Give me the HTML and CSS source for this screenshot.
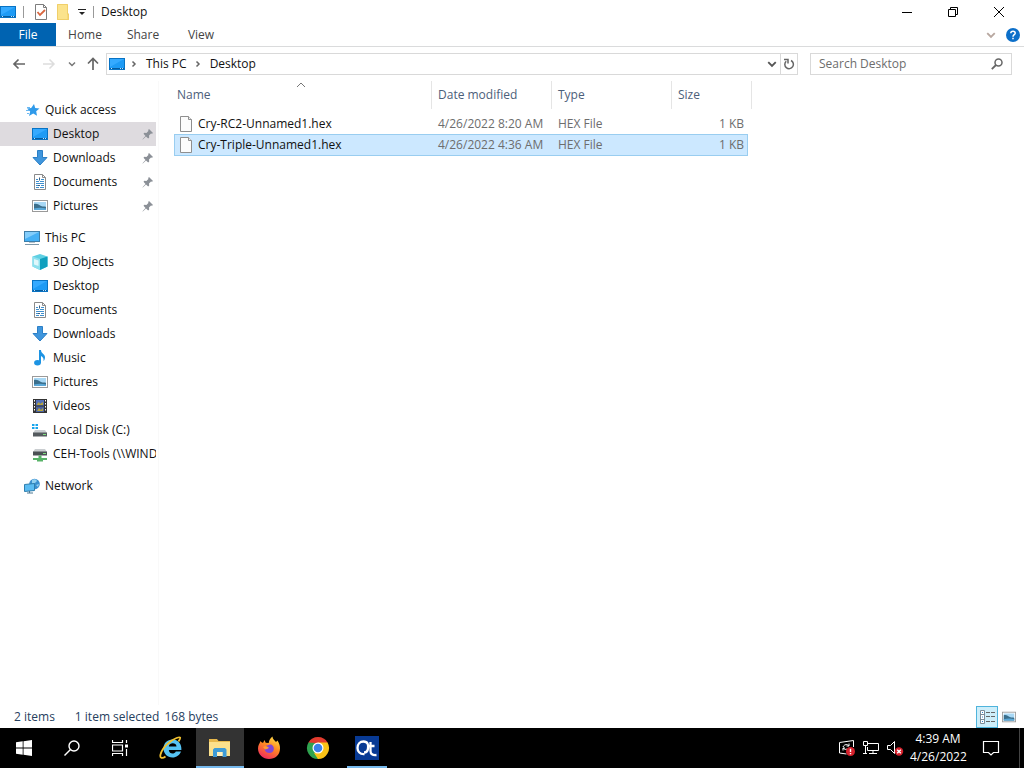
FILE: index.html
```html
<!DOCTYPE html>
<html lang="en">
<head>
  <meta charset="UTF-8">
  <title>Desktop</title>
  <link rel="stylesheet" href="styles.css">
</head>
<body>
  <!-- Shared icons -->
  <svg class="sprite" aria-hidden="true">
    <symbol id="i-desktop" viewBox="0 0 16 16">
      <rect x="0.5" y="2.5" width="15" height="11" fill="#1e9bf5" stroke="#0873c4"/>
      <path d="M1 3h14L1 11z" fill="#35aaff"/>
      <path d="M1 12.5h14" stroke="#075c9e"/>
      <path d="M2 12.5h1M11 12.5h1M13 12.5h1" stroke="#bfe4ff"/>
    </symbol>
    <symbol id="i-down" viewBox="0 0 16 16">
      <path d="M5.5 0.5h5v7h4.5L8 15 1 7.5h4.5z" fill="#3f96dd" stroke="#2b7fc6"/>
    </symbol>
    <symbol id="i-doc" viewBox="0 0 16 16">
      <path d="M2.5.5h8l3 3v12h-11z" fill="#fff" stroke="#8a8a8a"/>
      <path d="M10.5.5v3h3" fill="none" stroke="#8a8a8a"/>
      <path d="M4 5.500h2M9 5.500h3M4 7.500h3M8 7.500h4M4 9.500h8M4 11.500h2M9 11.500h3M4 13.500h3M8 13.500h4" stroke="#3f8fcd"/>
      <path d="M7 3.500h1v3H7zM6 11h2v1H6z" fill="#3c5f80"/>
    </symbol>
    <symbol id="i-pic" viewBox="0 0 16 16">
      <rect x="0.5" y="2.5" width="15" height="11" fill="#fff" stroke="#9a9a9a"/>
      <rect x="2" y="4" width="12" height="8" fill="#a8d8f5"/>
      <path d="M2 6c3-1 5 1 7 2s4 0 5 1v3H2z" fill="#3b6f8c"/>
      <path d="M2 10.500c4-1 8-1 12 0V12H2z" fill="#5aa8d8"/>
    </symbol>
    <symbol id="i-pin" viewBox="0 0 12 12">
      <path d="M7 1l4 4-1 .8-1-.2-2 2 .2 2-1 .9L4 8.500.8 11.500.5 11.200 3.500 8 1.500 5.800l.9-1 2 .2 2-2-.2-1z" fill="#8b9097"/>
    </symbol>
    <symbol id="i-chev" viewBox="0 0 8 8">
      <path d="M1 2.500l3 3 3-3" fill="none" stroke="currentColor" stroke-width="1.500"/>
    </symbol>
    <symbol id="i-right" viewBox="0 0 8 8">
      <path d="M2.500 1.500l2.500 2.500-2.500 2.500" fill="none" stroke="#666" stroke-width="1.500"/>
    </symbol>
    <symbol id="i-file" viewBox="0 0 16 16">
      <path d="M2.500.5h8l3 3v12h-11z" fill="#fcfcfc" stroke="#8f8f8f"/>
      <path d="M10.500.5v3h3" fill="#eee" stroke="#8f8f8f"/>
    </symbol>
  </svg>

  <header class="titlebar">
    <svg class="icon"><use href="#i-desktop"/></svg>
    <span class="divider"></span>
    <button class="quick" aria-label="Properties">
      <svg class="icon" viewBox="0 0 16 16"><path d="M2.500.5h8l3 3v12h-11z" fill="#fff" stroke="#7d7d7d"/><path d="M10.500.5v3h3" fill="none" stroke="#7d7d7d"/><path d="M4.500 8l2.500 3 5-5" fill="none" stroke="#d9663f" stroke-width="1.800"/></svg>
    </button>
    <button class="quick" aria-label="New folder">
      <svg class="icon" viewBox="0 0 16 16"><path d="M2 0h11v11l1 1v4H2z" fill="#fbe38c"/><path d="M12.500 9.500H14v6h-1.500z" fill="#f3d063"/><path d="M2.500.5h10v9.500l1 1v4.500h-11z" fill="none" stroke="#f0cf6a"/></svg>
    </button>
    <button class="quick-more" aria-label="Customize toolbar">
      <svg width="8" height="8" viewBox="0 0 8 8"><path d="M0 1.500h8" stroke="#222"/><path d="M1 4h6L4 7z" fill="#222"/></svg>
    </button>
    <span class="divider"></span>
    <h1>Desktop</h1>
    <div class="window-buttons">
      <button aria-label="Minimize"><svg width="12" height="12" viewBox="0 0 12 12"><path d="M1 6.500h10" stroke="#000"/></svg></button>
      <button aria-label="Restore"><svg width="12" height="12" viewBox="0 0 12 12"><path d="M1.500 3.500h7v7h-7zM3.500 3.500v-2h7v7h-2" fill="none" stroke="#000"/></svg></button>
      <button aria-label="Close"><svg width="12" height="12" viewBox="0 0 12 12"><path d="M1 1l10 10M11 1L1 11" stroke="#000"/></svg></button>
    </div>
  </header>

  <nav class="ribbon">
    <button class="tab file-tab">File</button>
    <button class="tab">Home</button>
    <button class="tab">Share</button>
    <button class="tab">View</button>
    <div class="ribbon-end">
      <button aria-label="Expand ribbon" class="expand"><svg width="10" height="10"><use href="#i-chev"/></svg></button>
      <button aria-label="Help"><svg width="14" height="14" viewBox="0 0 14 14"><circle cx="7" cy="7" r="7" fill="#0c6fc9"/><path d="M4.800 5.200C4.800 2.500 9.200 2.500 9.200 5.200 9.200 6.700 7 6.700 7 8.700M7 9.800v1.500" fill="none" stroke="#fff" stroke-width="1.500"/></svg></button>
    </div>
  </nav>

  <div class="address-row">
    <div class="history">
      <button aria-label="Back"><svg width="14" height="14" viewBox="0 0 14 14"><path d="M13 7H2M6.500 2.500L2 7l4.500 4.500" fill="none" stroke="#666" stroke-width="1.700"/></svg></button>
      <button aria-label="Forward"><svg width="14" height="14" viewBox="0 0 14 14"><path d="M1 7h11M7.500 2.500L12 7l-4.500 4.500" fill="none" stroke="#ddd" stroke-width="1.500"/></svg></button>
      <button aria-label="Recent" class="recent"><svg width="8" height="8"><use href="#i-chev"/></svg></button>
      <button aria-label="Up" class="up"><svg width="14" height="14" viewBox="0 0 14 14"><path d="M7 13V2M2 6.500L7 1.500l5 5" fill="none" stroke="#666" stroke-width="1.700"/></svg></button>
    </div>
    <div class="address">
      <svg class="icon"><use href="#i-desktop"/></svg>
      <svg class="crumb-arrow"><use href="#i-right"/></svg>
      <button>This PC</button>
      <svg class="crumb-arrow"><use href="#i-right"/></svg>
      <button>Desktop</button>
      <button class="drop" aria-label="Previous locations"><svg width="10" height="10"><use href="#i-chev"/></svg></button>
      <button class="refresh" aria-label="Refresh"><svg width="12" height="12" viewBox="0 0 12 12"><path d="M8 2.500A4.300 4.300 0 1 1 3.200 3.200M1 1.500h4v4" fill="none" stroke="#666" stroke-width="1.500"/></svg></button>
    </div>
    <div class="search">
      <input type="text" placeholder="Search Desktop" aria-label="Search Desktop">
      <svg width="12" height="12" viewBox="0 0 12 12"><circle cx="7.500" cy="4.500" r="3.500" fill="none" stroke="#666" stroke-width="1.500"/><path d="M5 7L.8 11.200" stroke="#666" stroke-width="1.800"/></svg>
    </div>
  </div>

  <main class="content">
    <nav class="tree">
      <ul>
        <li class="root"><a href="#"><svg class="icon" viewBox="0 0 16 16"><path d="M10 2l1.200 4 4.300.5-3.300 2.800.8 4.500-3.800-2.300L5 14l1.200-4.600L3 6.500l4.200-.5z" fill="#2f9aea"/><path d="M3 5.500h3M2 8.500h3M3 11.500h2" stroke="#6bb8f2"/></svg><span>Quick access</span></a></li>
        <li class="current"><a href="#"><svg class="icon"><use href="#i-desktop"/></svg><span>Desktop</span><svg class="pin"><use href="#i-pin"/></svg></a></li>
        <li><a href="#"><svg class="icon"><use href="#i-down"/></svg><span>Downloads</span><svg class="pin"><use href="#i-pin"/></svg></a></li>
        <li><a href="#"><svg class="icon"><use href="#i-doc"/></svg><span>Documents</span><svg class="pin"><use href="#i-pin"/></svg></a></li>
        <li><a href="#"><svg class="icon"><use href="#i-pic"/></svg><span>Pictures</span><svg class="pin"><use href="#i-pin"/></svg></a></li>
      </ul>
      <ul>
        <li class="root"><a href="#"><svg class="icon" viewBox="0 0 16 16"><rect x=".5" y="1.500" width="15" height="10" fill="#45b0f5" stroke="#3f7ea8"/><path d="M1 2h14L1 9z" fill="#83cdfb"/><path d="M5 12.500h6" stroke="#b5c2cb"/><path d="M1 14.500h14" stroke="#7c97a9"/></svg><span>This PC</span></a></li>
        <li><a href="#"><svg class="icon" viewBox="0 0 16 16"><path d="M8 0l7.500 2.500v10L8 16 .5 12.500v-10z" fill="#5fd0e3"/><path d="M.5 2.500L8 5v11L.5 12.500z" fill="#8ee0ee"/><path d="M2 5l4.500 1.500V12L2 10.500z" fill="#dff7fb"/><path d="M8 5l7.500-2.500v10L8 16z" fill="#109fbe"/></svg><span>3D Objects</span></a></li>
        <li><a href="#"><svg class="icon"><use href="#i-desktop"/></svg><span>Desktop</span></a></li>
        <li><a href="#"><svg class="icon"><use href="#i-doc"/></svg><span>Documents</span></a></li>
        <li><a href="#"><svg class="icon"><use href="#i-down"/></svg><span>Downloads</span></a></li>
        <li><a href="#"><svg class="icon" viewBox="0 0 16 16"><ellipse cx="5.500" cy="12.800" rx="3.400" ry="2.700" fill="#1c93e3"/><path d="M7 0h2c0 3.500 4 4 4 7.500 0 1.500-.8 3-1.500 3.500.5-3-1-4-2.500-5v7H7z" fill="#1c93e3"/></svg><span>Music</span></a></li>
        <li><a href="#"><svg class="icon"><use href="#i-pic"/></svg><span>Pictures</span></a></li>
        <li><a href="#"><svg class="icon" viewBox="0 0 16 16"><path d="M1 1h14v14H1z" fill="#333"/><path d="M4 2h8v5.500H4z" fill="#5470b8"/><path d="M4 8.500h8V14H4z" fill="#4b63a0"/><path d="M5 6l2-2 1 2 3-2v3H5zM5 13l2-3 2 2 2-2v3z" fill="#b7a43c"/><path d="M2.500 2v12M13.500 2v12" stroke="#fff" stroke-dasharray="1.500 1.500"/></svg><span>Videos</span></a></li>
        <li><a href="#"><svg class="icon" viewBox="0 0 16 16"><path d="M0 2h2.500v2H0zM3.500 2H6v2H3.500zM0 5h2.500v2H0zM3.500 5H6v2H3.500z" fill="#18a5ed"/><path d="M3 8h10l2 3H1z" fill="#c9cdd0"/><path d="M1 10.500h14v4H1z" fill="#555b5f"/><path d="M11 12.500h3" stroke="#7fe07f"/></svg><span>Local Disk (C:)</span></a></li>
        <li><a href="#"><svg class="icon" viewBox="0 0 16 16"><path d="M3 3h10l2 3H1z" fill="#c9cdd0"/><path d="M1 5.500h14v4H1z" fill="#4b5054"/><path d="M11 7.500h3" stroke="#7fe07f"/><path d="M6.500 9.500h3V12H15v2h-4v1.500H5V14H1v-2h5.500z" fill="#58b368"/></svg><span>CEH-Tools (\\WIND</span></a></li>
      </ul>
      <ul>
        <li class="root"><a href="#"><svg class="icon" viewBox="0 0 16 16"><circle cx="10.500" cy="6" r="5.300" fill="#3b8fcf"/><path d="M8 2c2-1 4-1 5 1l-2 2-3 1zM12 7l3-1-1 3z" fill="#93d0ef"/><path d="M.5 6.500l10-1v7l-10 1z" fill="#5bbcf2" stroke="#2f7fae"/><path d="M3 15h6M5.500 13v2" stroke="#4d7893"/></svg><span>Network</span></a></li>
      </ul>
    </nav>

    <section class="files">
      <table>
        <thead>
          <tr>
            <th class="col-name">Name
              <svg class="sort" viewBox="0 0 10 6"><path d="M1 5l4-4 4 4" fill="none" stroke="#777"/></svg>
            </th>
            <th class="col-date">Date modified</th>
            <th class="col-type">Type</th>
            <th class="col-size">Size</th>
            <th class="col-end"></th>
          </tr>
        </thead>
        <tbody>
          <tr>
            <td><div class="filename"><svg class="icon"><use href="#i-file"/></svg>Cry-RC2-Unnamed1.hex</div></td>
            <td>4/26/2022 8:20 AM</td>
            <td>HEX File</td>
            <td class="size">1 KB</td>
          </tr>
          <tr class="selected">
            <td><div class="filename"><svg class="icon"><use href="#i-file"/></svg>Cry-Triple-Unnamed1.hex</div></td>
            <td>4/26/2022 4:36 AM</td>
            <td>HEX File</td>
            <td class="size">1 KB</td>
          </tr>
        </tbody>
      </table>
    </section>
  </main>

  <footer class="status">
    <span class="count">2 items</span>
    <span>1 item selected</span>
    <span class="bytes">168 bytes</span>
    <div class="views">
      <button class="active" aria-label="Details view"><svg width="16" height="16" viewBox="0 0 16 16"><path d="M1.500 1.500h4v13h-4zM1.500 5.500h4M1.500 10.500h4" fill="#fff" stroke="#7b8c98"/><path d="M3 3.500h1M3 8h1M3 12.500h1" stroke="#2f86cf"/><path d="M7 3.500h4M12 3.500h4M7 7.500h4M12 7.500h4M7 12.500h4M12 12.500h4" stroke="#666"/></svg></button>
      <button aria-label="Large icons view"><svg width="14" height="14"><use href="#i-pic"/></svg></button>
    </div>
  </footer>

  <div class="taskbar">
    <button aria-label="Start"><svg width="16" height="16" viewBox="0 0 16 16" fill="#fff"><path d="M0 2.300l6.700-1v6.300H0zM7.500 1.200L16 0v7.600H7.500zM0 8.400h6.700v6.300L0 13.800zM7.500 8.400H16V16l-8.500-1.200z"/></svg></button>
    <button aria-label="Search"><svg width="16" height="16" viewBox="0 0 16 16" fill="none" stroke="#fff" stroke-width="1.400"><circle cx="10" cy="6" r="5"/><path d="M6.500 9.500L.5 15.500"/></svg></button>
    <button aria-label="Task view"><svg width="16" height="16" viewBox="0 0 16 16" fill="none" stroke="#fff" stroke-width="1.200"><path d="M.5 0v2.500h10V0M.5 16v-2.500h10V16M.5 5h10v6H.5zM14.500 0v3M14.500 9v7"/><path d="M13 4.500h3v3h-3z" fill="#fff" stroke="none"/></svg></button>
    <div class="apps">
      <button aria-label="Internet Explorer"><svg width="24" height="24" viewBox="0 0 24 24"><path d="M22 15.500c-1.300 3.600-4.500 6-8.500 6-5.200 0-9-3.700-9-8.900s3.800-9 9-9c5.600 0 9.300 4.200 8.900 10.400H9.800c.3 4.200 5.500 4.700 7 1.500z" fill="#55c3f3"/><path d="M9.800 10.500h7.700c-.2-4.200-7.200-4.200-7.700 0z" fill="#000"/><path d="M19.500 5.500C22.500 1 21.500.5 17.500 2 10.500 4.500 3 12.500 1.500 18.500c-1 4 2 4.300 5 2" fill="none" stroke="#f2c230" stroke-width="1.800"/></svg></button>
      <button class="open" aria-label="File Explorer"><svg width="24" height="24" viewBox="0 0 24 24"><path d="M1 3h8l1.500 2H22v15H1z" fill="#e7b84c"/><path d="M1 6h21v14H1z" fill="#fbe08c"/><path d="M5 21v-7.500L6.500 12H17l1.500 1.500V21h-4v-5H9v5z" fill="#3e9bd6"/><path d="M9 16h5.500v4H9z" fill="#fff0bd"/></svg></button>
      <button aria-label="Firefox"><svg width="24" height="24" viewBox="0 0 24 24"><defs><linearGradient id="ff" x1=".8" y1="0" x2=".3" y2="1"><stop offset="0" stop-color="#ffe14a"/><stop offset=".45" stop-color="#ff8a22"/><stop offset="1" stop-color="#f0285e"/></linearGradient></defs><path d="M3.500 5c.5 1 1.500 1.500 2.500 2L7.500 4l1.200 2.800 3 .2C12 4 13.500 2 15.500.5c0 2.500 2 3.500 3.500 5.500l1.500-1.500c2 3 2.500 5.500 2.500 8C23 19 18 23 12 23S1 18.500 1 12.500C1 9 2.500 8 3.500 5z" fill="url(#ff)"/><path d="M9 9.500c2 .5 3.500-2 6-.5 3 2 2.500 8-2.500 8-3 0-5-2-5-4.500l3.500-.5z" fill="#8047d6"/><path d="M6 11c2-2 5 0 6 .5-1 2-3 1.500-4 2z" fill="#ff9b32"/></svg></button>
      <button aria-label="Chrome"><svg width="24" height="24" viewBox="0 0 24 24"><path d="M12 12L2.470 6.500a11 11 0 0 1 19.060 0z" fill="#e33b2e"/><path d="M12 12L21.530 6.500A11 11 0 0 1 12 23z" fill="#fbc316"/><path d="M12 12V23A11 11 0 0 1 2.470 6.500z" fill="#2fa24f"/><path d="M12 6.500h9.530L17 14.500z" fill="#fbc316"/><path d="M16.800 14.700L12 23 8 17z" fill="#fbc316"/><path d="M7.300 14.800L2.470 6.500 9 7z" fill="#2fa24f"/><circle cx="12" cy="12" r="5.500" fill="#fff"/><circle cx="12" cy="12" r="4.300" fill="#3b82ea"/></svg></button>
      <button class="running" aria-label="CrypTool"><svg width="24" height="24" viewBox="0 0 24 24"><path d="M0 0h24v24H0z" fill="#083a94"/><path d="M9.500 18C5 18.500 2.500 15.500 2.500 12 2.500 8 5 5.500 8.500 5.500c4.500 0 5 3.500 4.500 7-.3 2.500-2 4-4 4M15.500 6v9c0 3 2 4.500 6 4M12 10h7.500" fill="none" stroke="#fff" stroke-width="2.300"/></svg></button>
    </div>
    <div class="tray">
      <button aria-label="Windows Update"><svg width="18" height="18" viewBox="0 0 18 18" fill="none" stroke="#fff"><path d="M15.500 8V1.500l-14 2v10.500l7 1"/><path d="M5 8c1-3 5-3 6-1M11 4.500V7H8.500M9 10c-1.500 1-3 0-4-1M5 11.500V9h2"/><circle cx="12.500" cy="12.500" r="4.500" fill="#d5212c" stroke="none"/><path d="M12.500 9.800v3.200M12.500 14v1.300" stroke-width="1.400"/></svg></button>
      <button aria-label="Network"><svg width="18" height="18" viewBox="0 0 18 18" fill="none" stroke="#fff"><path d="M6 4.500h10.500v7h-11V8M1.500 2.500h4v4h-4zM3.500 6.500v8M11 11.500v3M7 14.500h8M1 14.500h4"/></svg></button>
      <button aria-label="Volume muted"><svg width="18" height="18" viewBox="0 0 18 18" fill="none" stroke="#fff"><path d="M1.500 6.500h3l4-4v12l-4-4h-3z"/><circle cx="13" cy="12.500" r="4.200" fill="#d5212c" stroke="none"/><path d="M11.200 10.700l3.600 3.600M14.800 10.700l-3.600 3.600" stroke-width="1.400"/></svg></button>
      <div class="clock"><div>4:39 AM</div><div>4/26/2022</div></div>
      <button class="notify" aria-label="Notifications"><svg width="18" height="18" viewBox="0 0 18 18" fill="none" stroke="#fff" stroke-width="1.200"><path d="M1.500 2.500h15v11h-5L9 16l-2.500-2.500h-5z"/></svg></button>
    </div>
  </div>
</body>
</html>
```
FILE: styles.css
```css
* {
  box-sizing: border-box;
}

body {
  margin: 0;
  min-height: 100vh;
  display: flex;
  flex-direction: column;
  background: #fff;
  color: #111;
  font-family: "Open Sans", "Noto Sans", sans-serif;
  font-size: 12px;
  line-height: 16px;
}

button {
  font: inherit;
  color: inherit;
  background: none;
  border: none;
  padding: 0;
  display: flex;
  align-items: center;
  justify-content: center;
}

svg {
  display: block;
  flex: none;
}

.sprite {
  position: absolute;
  width: 0;
  height: 0;
}

.icon {
  width: 16px;
  height: 16px;
}

/* Title bar */
.titlebar {
  display: flex;
  align-items: center;
  height: 23px;
}

.titlebar h1 {
  margin: 0 0 0 7px;
  font-size: 12px;
  font-weight: normal;
}

.divider {
  width: 1px;
  height: 12px;
  margin-left: 7px;
  background: #999;
}

.quick {
  margin-left: 6px;
}

.quick:first-of-type {
  margin-left: 9px;
}

.quick-more {
  margin-left: 7px;
}

.window-buttons {
  display: flex;
  margin-left: auto;
  margin-right: 2px;
}

.window-buttons button {
  width: 46px;
  height: 20px;
}

/* Ribbon tabs */
.ribbon {
  display: flex;
  height: 24px;
  border-bottom: 1px solid #dadbdc;
  color: #444;
}

.tab {
  width: 58px;
}

.file-tab {
  width: 56px;
  background: #0063b1;
  color: #fff;
}

.ribbon-end {
  display: flex;
  gap: 10px;
  margin-left: auto;
  padding-right: 4px;
}

.expand {
  color: #b8a8a0;
}

/* Address bar */
.address-row {
  display: flex;
  align-items: center;
  height: 34px;
  padding-right: 12px;
}

.history {
  display: flex;
  align-items: center;
  width: 106px;
  padding-left: 12px;
  color: #777;
}

.history button + button {
  margin-left: 16px;
}

.history .recent {
  margin-left: 12px;
}

.history .up.up {
  margin-left: 10px;
}

.address {
  flex: 1;
  display: flex;
  align-items: center;
  height: 22px;
  padding-left: 2px;
  border: 1px solid #d9d9d9;
}

.crumb-arrow {
  width: 8px;
  height: 8px;
  margin: 0 8px 0 5px;
}

.address button + .crumb-arrow {
  margin-left: 7px;
}

.address .drop {
  width: 16px;
  margin-left: auto;
  color: #555;
}

.address .refresh {
  width: 17px;
  height: 20px;
  border-left: 1px solid #d9d9d9;
}

.search {
  display: flex;
  align-items: center;
  width: 202px;
  height: 22px;
  margin-left: 12px;
  padding: 0 8px;
  border: 1px solid #d9d9d9;
}

.search input {
  flex: 1;
  min-width: 0;
  padding: 0;
  border: none;
  outline: none;
  font: inherit;
}

.search input::placeholder {
  color: #6d6d6d;
}

/* Folder tree */
.content {
  flex: 1;
  display: flex;
}

.tree {
  width: 159px;
  padding: 17px 2px 0 0;
  border-right: 1px solid #f9f9f9;
}

.tree ul {
  list-style: none;
  margin: 0 0 8px;
  padding: 0;
}

.tree a {
  display: flex;
  align-items: center;
  gap: 5px;
  height: 24px;
  padding-left: 32px;
  color: inherit;
  text-decoration: none;
  white-space: nowrap;
  overflow: hidden;
}

.tree .root a {
  padding-left: 24px;
}

.tree .current {
  background: #dedbdf;
}

.pin {
  width: 12px;
  height: 12px;
  margin-left: auto;
  margin-right: 2px;
}

/* File list */
.files {
  flex: 1;
  padding-left: 15px;
}

table {
  table-layout: fixed;
  width: 578px;
  border-collapse: separate;
  border-spacing: 0;
}

th {
  position: relative;
  height: 28px;
  padding: 0 6px;
  border-right: 1px solid #e5e5e5;
  color: #4c607a;
  font-weight: normal;
  text-align: left;
}

.col-name {
  width: 258px;
  padding-left: 3px;
}

.col-date,
.col-type {
  width: 120px;
}

.col-size {
  width: 76px;
  border-right: none;
}

.col-end {
  padding: 0;
}

/* sits on the top edge of the sorted column */
.sort {
  position: absolute;
  top: 1px;
  left: calc(50% - 7px);
  width: 10px;
  height: 6px;
}

tbody::before {
  content: "";
  display: block;
  height: 4px;
}

td {
  height: 21px;
  padding: 0 6px;
  border: solid transparent;
  border-width: 1px 0;
  color: #6d6d6d;
  white-space: nowrap;
}

td:first-child {
  padding-left: 3px;
  border-left-width: 1px;
  color: #111;
}

td.size {
  padding: 0 3px;
  border-right-width: 1px;
  text-align: right;
}

.filename {
  display: flex;
  align-items: center;
  gap: 4px;
}

.selected td {
  height: 22px;
  background: #cce8ff;
  border-color: #99cdf0;
}

/* Status bar */
.status {
  display: flex;
  align-items: center;
  height: 23px;
  padding: 0 4px 0 14px;
  color: #26405e;
}

.count {
  margin-right: 20px;
}

.bytes {
  margin-left: 5px;
}

.views {
  display: flex;
  margin-left: auto;
}

.views button {
  width: 22px;
  height: 22px;
}

.views .active {
  background: #cdeefa;
  border: 1px solid #4fb4dc;
}

/* Taskbar */
.taskbar {
  display: flex;
  height: 40px;
  background: #000;
  color: #fff;
}

.taskbar > button,
.apps button {
  width: 48px;
}

.apps {
  display: flex;
  gap: 1px;
  margin-left: 3px;
}

.apps .open {
  background: #333;
  box-shadow: inset 0 -2px #76b9ed;
}

.apps .running {
  background: linear-gradient(#76b9ed, #76b9ed) center bottom / 40px 2px no-repeat;
}

.tray {
  display: flex;
  align-items: center;
  gap: 6px;
  margin-left: auto;
  margin-right: 4px;
  border-right: 1px solid #444;
}

.clock {
  width: 56px;
  line-height: 18px;
  text-align: center;
}

.notify {
  margin-left: 10px;
  margin-right: 19px;
}
```
